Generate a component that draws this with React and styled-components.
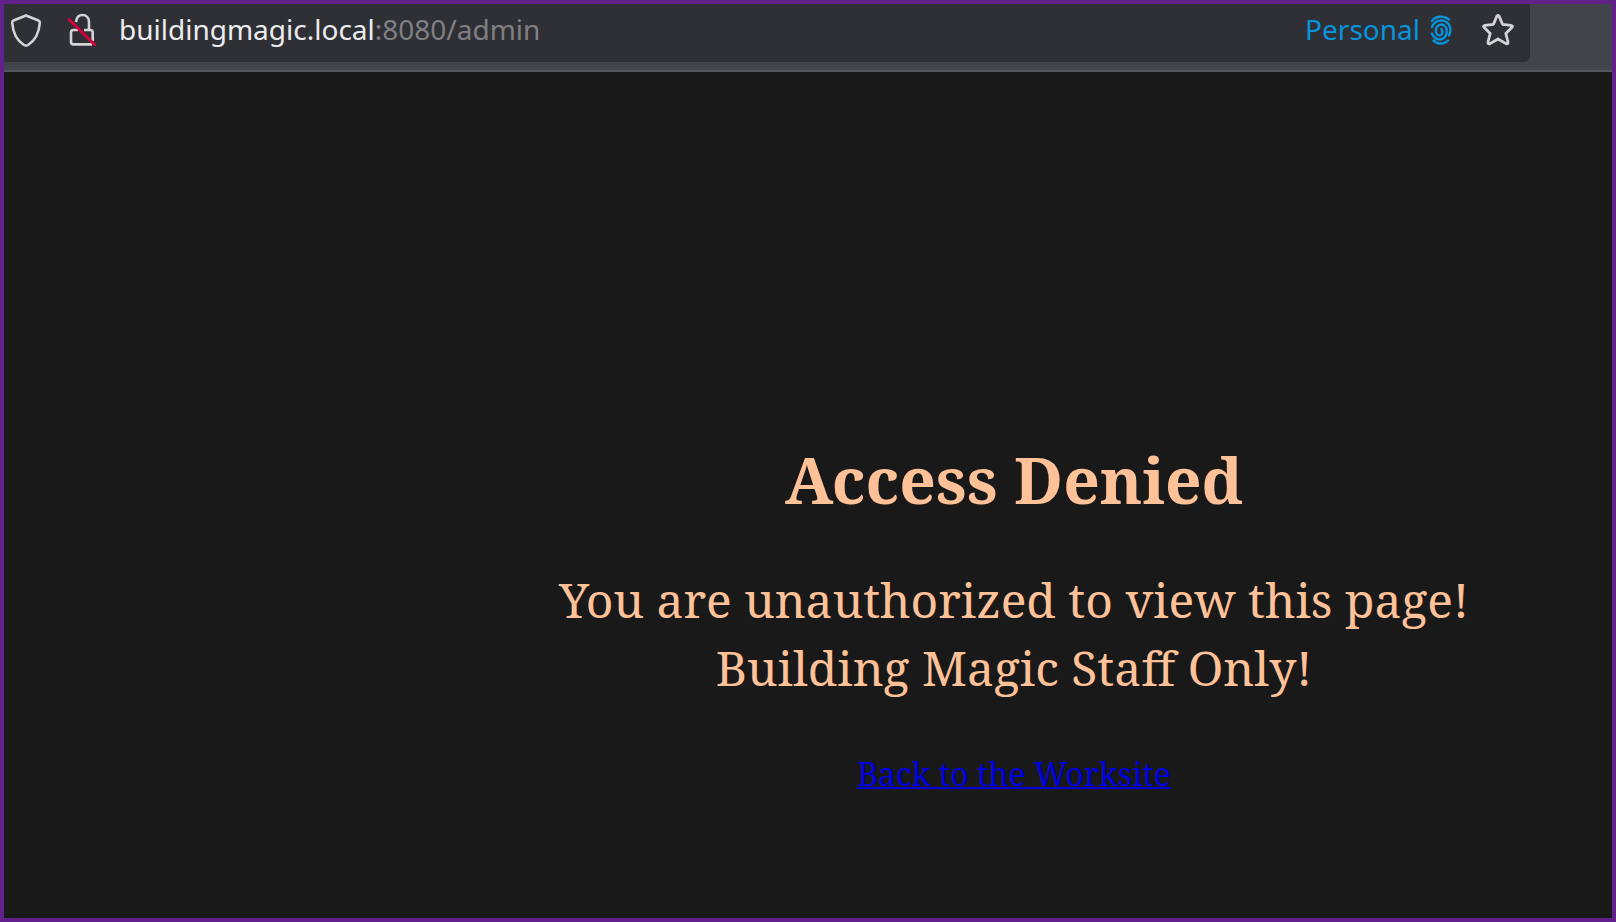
import React from 'react';
import styled, { createGlobalStyle } from 'styled-components';

const GlobalStyle = createGlobalStyle`
  body {
    margin: 0;
    background-color: #191919;
  }
`;

const Window = styled.div`
  box-sizing: border-box;
  display: flex;
  flex-flow: column nowrap;
  min-height: 100vh;
  border: 4px solid #62208a;
`;

const Toolbar = styled.header`
  display: flex;
  padding: 0 82px 8px 0;
  background-color: #42444c;
  border-bottom: 2px solid #53565c;
`;

const AddressBar = styled.div`
  box-sizing: border-box;
  display: flex;
  flex: 1;
  align-items: center;
  height: 58px;
  padding: 0 15px 6px 4px;
  background-color: #2f3035;
  border-radius: 0 0 6px 0;
  font-family: 'Noto Sans', sans-serif;
  font-size: 28px;
  line-height: 38px;
`;

const IconButton = styled.button`
  display: flex;
  margin: 0 ${({ $gap }) => $gap || 0} 0 0;
  padding: 0;
  border: none;
  background: none;
  color: #d4d4d6;
`;

const Address = styled.div`
  flex: 1;
  padding-bottom: 2px;
  color: #808084;
`;

const Host = styled.span`
  color: #ececee;
`;

const Container = styled.button`
  display: flex;
  align-items: center;
  gap: 10px;
  margin: 0 29px 0 0;
  padding: 0;
  border: none;
  background: none;
  color: #0594dd;
  font: inherit;
`;

const ContainerName = styled.span`
  padding-bottom: 2px;
`;

const Page = styled.main`
  display: flex;
  flex: 1;
  flex-flow: column nowrap;
  align-items: center;
  padding: 364px 0 0 412px;
  color: #ffc197;
  font-family: 'Noto Serif', 'Droid Serif', 'DejaVu Serif', serif;
  text-align: center;
`;

const Title = styled.h1`
  margin: 0 0 42px;
  font-size: 64px;
  line-height: 88px;
`;

const Message = styled.p`
  margin: 0 0 50px;
  font-size: 48px;
  line-height: 68px;
`;

const BackLink = styled.a`
  color: #0000e0;
  font-size: 32px;
  line-height: 44px;
  text-decoration-thickness: 2px;
`;

const ShieldIcon = () => (
  <svg width="34" height="36" viewBox="0 0 34 36" fill="none" stroke="currentColor" strokeWidth="2.6" strokeLinejoin="round">
    <path d="M18 3.5 L30.5 8.5 Q32 9.2 31.8 11 C31 21 27 28.5 20 33 Q18 34.2 16 33 C9 28.5 5 21 4.2 11 Q4 9.2 5.5 8.5 Z" />
  </svg>
);

const LockIcon = () => (
  <svg width="34" height="36" viewBox="0 0 34 36" fill="none" stroke="currentColor" strokeWidth="2.6">
    <path d="M11 10 C11.5 5.5 14 3 17.5 3 C21.5 3 24 6 24 10 V18" />
    <path d="M13 18 H8.500 Q6 18 6 20.5 V30 Q6 32.4 8.500 32.4 H27" />
    <path d="M19 18 H25.300 Q27.700 18 27.700 20.500 V29" />
    <path d="M4 7.5 L29.5 32.5" stroke="#d70040" strokeWidth="3" strokeLinecap="round" />
  </svg>
);

const FingerprintIcon = () => (
  <svg width="22" height="30" viewBox="0 0 22 30" fill="none" stroke="currentColor" strokeWidth="2.4" strokeLinecap="round">
    <path d="M2 6 C5 .8 14 .2 19 4.5" />
    <path d="M2 12 C4.5 5.500 11 4.2 15.5 6.5 C20.500 9 21.500 15 19 20.5" />
    <path d="M1.8 18.5 C4 23 7 24.800 10.5 24.5 C15.500 24 17.500 18.500 16.500 14 C15.700 10.500 12.500 8.700 9.500 9.8 C6 11.100 5 15.500 6.5 18.500 C7.500 20.500 10 21 11.500 19.5 C12.500 18.300 12.500 16 11.500 14" />
    <path d="M3.5 25.5 C8 29.600 14 29.500 18 25.500" />
  </svg>
);

const StarIcon = () => (
  <svg width="34" height="34" viewBox="0 0 34 34" fill="none" stroke="currentColor" strokeWidth="2.8" strokeLinejoin="round">
    <path d="M15.7 3.5 Q17 1.2 18.3 3.5 L21.5 11.3 L30 12.3 Q32.5 12.8 30.8 14.6 L24.8 20.5 L27 29 Q27.3 31.5 25 30.6 L17 26 L9 30.6 Q6.7 31.5 7 29 L9.2 20.5 L3.2 14.6 Q1.5 12.8 4 12.3 L12.5 11.3 Z" />
  </svg>
);

const App = () => {
  return (
    <>
      <GlobalStyle />
      <Window>
        <Toolbar>
          <AddressBar>
            <IconButton type='button' aria-label='Tracking protection' $gap='23px'><ShieldIcon /></IconButton>
            <IconButton type='button' aria-label='Connection not secure' $gap='20px'><LockIcon /></IconButton>
            <Address><Host>buildingmagic.local</Host>:8080/admin</Address>
            <Container type='button'>
              <ContainerName>Personal</ContainerName>
              <FingerprintIcon />
            </Container>
            <IconButton type='button' aria-label='Bookmark this page'><StarIcon /></IconButton>
          </AddressBar>
        </Toolbar>
        <Page>
          <Title>Access Denied</Title>
          <Message>
            You are unauthorized to view this page!<br />
            Building Magic Staff Only!
          </Message>
          <BackLink href='/'>Back to the Worksite</BackLink>
        </Page>
      </Window>
    </>
  )
}

export default App;
